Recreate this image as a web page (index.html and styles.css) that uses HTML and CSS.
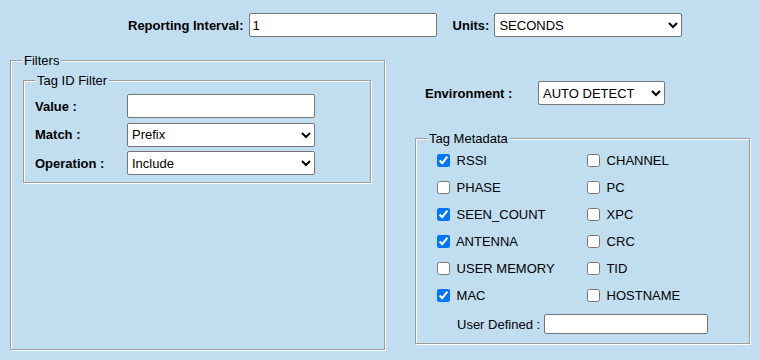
FILE: index.html
```html
<!DOCTYPE html>
<html>

<head>
    <link rel="stylesheet" href="styles.css">
</head>

<body>
    <div class="page">
        <div class="top-row">
            <label for="interval" class="bold">Reporting Interval:</label>
            <input type="text" id="interval" class="interval" value="1">
            <label for="units" class="bold units-label">Units:</label>
            <select id="units" class="units">
                <option>SECONDS</option>
                <option>MINUTES</option>
            </select>
        </div>

        <div class="columns">
            <fieldset class="filters">
                <legend>Filters</legend>
                <fieldset class="tag-filter">
                    <legend>Tag ID Filter</legend>
                    <div class="filter-grid">
                        <label for="value" class="bold">Value :</label>
                        <input type="text" id="value" class="filter-input">

                        <label for="match" class="bold">Match :</label>
                        <select id="match" class="filter-input">
                            <option>Prefix</option>
                            <option>Suffix</option>
                            <option>Regex</option>
                        </select>

                        <label for="operation" class="bold">Operation :</label>
                        <select id="operation" class="filter-input">
                            <option>Include</option>
                            <option>Exclude</option>
                        </select>
                    </div>
                </fieldset>
            </fieldset>

            <div class="right-col">
                <div class="env-row">
                    <label for="environment" class="bold env-label">Environment :</label>
                    <select id="environment" class="env-select">
                        <option>AUTO DETECT</option>
                        <option>HIGH</option>
                        <option>LOW</option>
                    </select>
                </div>

                <fieldset class="metadata">
                    <legend>Tag Metadata</legend>
                    <div class="meta-grid">
                        <label><input type="checkbox" checked> RSSI</label>
                        <label><input type="checkbox"> CHANNEL</label>
                        <label><input type="checkbox"> PHASE</label>
                        <label><input type="checkbox"> PC</label>
                        <label><input type="checkbox" checked> SEEN_COUNT</label>
                        <label><input type="checkbox"> XPC</label>
                        <label><input type="checkbox" checked> ANTENNA</label>
                        <label><input type="checkbox"> CRC</label>
                        <label><input type="checkbox"> USER MEMORY</label>
                        <label><input type="checkbox"> TID</label>
                        <label><input type="checkbox" checked> MAC</label>
                        <label><input type="checkbox"> HOSTNAME</label>
                    </div>
                    <div class="user-row">
                        <label for="userDefined">User Defined :</label>
                        <input type="text" id="userDefined" class="user-input">
                    </div>
                </fieldset>
            </div>
        </div>
    </div>
</body>

</html>
```

FILE: styles.css
```css
body {
    margin: 0;
    background-color: #c0deef;
    font-family: "Liberation Sans", Arial, sans-serif;
    font-size: 13px;
    color: #000;
}

.page {
    width: 760px;
    height: 360px;
}

.bold {
    font-weight: bold;
}

input[type="text"],
select {
    box-sizing: border-box;
    font-family: "Liberation Sans", Arial, sans-serif;
    font-size: 13px;
    background-color: #fff;
    border: 1px solid #767676;
    border-radius: 2px;
}

input[type="text"] {
    padding: 1px 3px;
}

.top-row {
    display: flex;
    align-items: center;
    padding: 13px 0 0 128px;
}

.interval {
    width: 188px;
    height: 24px;
    margin: 0 0 0 5px;
}

.units-label {
    margin-left: 16px;
}

.units {
    width: 188px;
    height: 24px;
    margin: 0 0 0 5px;
}

.columns {
    display: flex;
    align-items: flex-start;
    padding: 16px 0 0 10px;
}

fieldset {
    margin: 0;
    border: 1px solid #9c9c9c;
    box-shadow: inset 1px 1px 0 #fff, 1px 1px 0 #fff;
    padding: 5px 11px 9px 11px;
}

legend {
    padding: 0 2px;
    background-color: #c0deef;
}

.filters {
    box-sizing: border-box;
    width: 375px;
    height: 297px;
    padding-left: 11px;
}

.tag-filter {
    margin: 0 2px 0 1px;
    padding-top: 6px;
    padding-bottom: 7px;
}

.filter-grid {
    display: grid;
    grid-template-columns: 92px 188px;
    grid-auto-rows: 24px;
    row-gap: 4.5px;
    align-items: center;
}

.filter-input {
    height: 24px;
    margin: 0;
}

.right-col {
    margin-left: 30px;
    width: 336px;
}

.env-row {
    display: flex;
    align-items: center;
    padding: 28px 0 0 10px;
}

.env-label {
    width: 113px;
}

.env-select {
    width: 127px;
    height: 24px;
    margin: 0;
}

.metadata {
    box-sizing: border-box;
    width: 335px;
    margin-top: 26px;
    padding: 1px 10px 9px 11px;
}

.meta-grid {
    display: grid;
    grid-template-columns: 150px auto;
    grid-auto-rows: 27px;
    align-items: center;
    padding-left: 6px;
}

.meta-grid label {
    display: flex;
    align-items: center;
    white-space: pre;
}

.meta-grid input {
    margin: 0 3px 0 4px;
    width: 13px;
    height: 13px;
}

.user-row {
    display: flex;
    align-items: center;
    margin-top: 5px;
    padding-left: 30px;
}

.user-input {
    width: 164px;
    height: 20px;
    margin: 0 0 0 4px;
}
```
